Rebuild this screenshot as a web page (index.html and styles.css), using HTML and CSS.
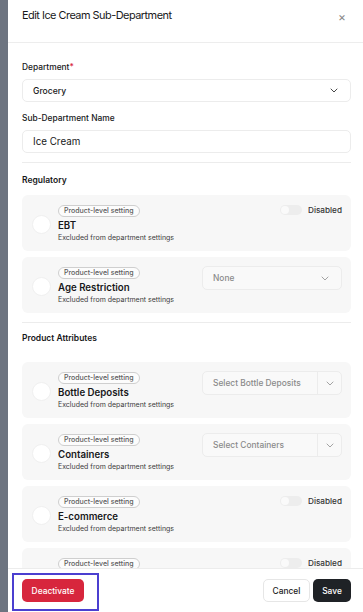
FILE: index.html
```html
<!DOCTYPE html>
<html lang="en">
<head>
  <meta charset="UTF-8">
  <meta name="viewport" content="width=device-width, initial-scale=1.0">
  <title>Edit Ice Cream Sub-Department</title>
  <link rel="stylesheet" href="styles.css">
</head>
<body>
  <div class="backdrop"></div>

  <div class="modal">
    <div class="modal-header">
      <h1>Edit Ice Cream Sub-Department</h1>
      <span class="close">&times;</span>
    </div>

    <div class="modal-body">
      <label class="field-label">Department<span class="req">*</span></label>
      <div class="select">
        <span>Grocery</span>
        <svg width="8" height="5" viewBox="0 0 8 5"><path d="M1 1l3 3 3-3" fill="none" stroke="#333" stroke-width="0.9" stroke-linecap="round" stroke-linejoin="round"/></svg>
      </div>

      <label class="field-label gap">Sub-Department Name</label>
      <div class="input">Ice Cream</div>

      <hr>

      <h2>Regulatory</h2>

      <div class="card">
        <span class="radio"></span>
        <div class="info">
          <span class="badge">Product-level setting</span>
          <div class="name">EBT</div>
          <div class="desc">Excluded from department settings</div>
        </div>
        <div class="toggle-wrap">
          <span class="toggle"><span class="knob"></span></span>
          <span>Disabled</span>
        </div>
      </div>

      <div class="card">
        <span class="radio"></span>
        <div class="info">
          <span class="badge">Product-level setting</span>
          <div class="name">Age Restriction</div>
          <div class="desc">Excluded from department settings</div>
        </div>
        <div class="mini-select">
          <span>None</span>
          <svg width="8" height="5" viewBox="0 0 8 5"><path d="M1 1l3 3 3-3" fill="none" stroke="#999" stroke-width="0.9" stroke-linecap="round" stroke-linejoin="round"/></svg>
        </div>
      </div>

      <hr>

      <h2 class="attr">Product Attributes</h2>

      <div class="card">
        <span class="radio"></span>
        <div class="info">
          <span class="badge">Product-level setting</span>
          <div class="name">Bottle Deposits</div>
          <div class="desc">Excluded from department settings</div>
        </div>
        <div class="mini-select split">
          <span>Select Bottle Deposits</span>
          <span class="arrow"><svg width="8" height="5" viewBox="0 0 8 5"><path d="M1 1l3 3 3-3" fill="none" stroke="#999" stroke-width="0.9" stroke-linecap="round" stroke-linejoin="round"/></svg></span>
        </div>
      </div>

      <div class="card">
        <span class="radio"></span>
        <div class="info">
          <span class="badge">Product-level setting</span>
          <div class="name">Containers</div>
          <div class="desc">Excluded from department settings</div>
        </div>
        <div class="mini-select split">
          <span>Select Containers</span>
          <span class="arrow"><svg width="8" height="5" viewBox="0 0 8 5"><path d="M1 1l3 3 3-3" fill="none" stroke="#999" stroke-width="0.9" stroke-linecap="round" stroke-linejoin="round"/></svg></span>
        </div>
      </div>

      <div class="card">
        <span class="radio"></span>
        <div class="info">
          <span class="badge">Product-level setting</span>
          <div class="name">E-commerce</div>
          <div class="desc">Excluded from department settings</div>
        </div>
        <div class="toggle-wrap">
          <span class="toggle"><span class="knob"></span></span>
          <span>Disabled</span>
        </div>
      </div>

      <div class="card">
        <span class="radio"></span>
        <div class="info">
          <span class="badge">Product-level setting</span>
          <div class="name">Online Ordering</div>
          <div class="desc">Excluded from department settings</div>
        </div>
        <div class="toggle-wrap">
          <span class="toggle"><span class="knob"></span></span>
          <span>Disabled</span>
        </div>
      </div>
    </div>

    <div class="modal-footer">
      <button class="btn btn-danger">Deactivate</button>
      <div class="right">
        <button class="btn btn-light">Cancel</button>
        <button class="btn btn-dark">Save</button>
      </div>
      <!-- destaque da anotação -->
      <div class="highlight"></div>
    </div>
  </div>
</body>
</html>
```

FILE: styles.css
```css
* {
  box-sizing: border-box;
}
body {
  margin: 0;
  display: flex;
  height: 612px;
  overflow: hidden;
  font-family: Inter, "Noto Sans", sans-serif;
  color: #17181a;
  background: #fff;
}
.backdrop {
  width: 8px;
  background-color: #6d7480;
}
.modal {
  flex: 1;
  display: flex;
  flex-direction: column;
  background: #fff;
  height: 612px;
}
.modal-header {
  height: 43px;
  border-bottom: 1px solid #ededed;
  display: flex;
  justify-content: space-between;
  align-items: flex-start;
  padding: 6px 17px 0 14px;
}
.modal-header h1 {
  margin: 0;
  font-size: 10.9px;
  font-weight: 400;
  line-height: 18px;
  letter-spacing: -0.5px;
}
.close {
  font-size: 12px;
  color: #888;
  line-height: 20px;
  margin-top: 1px;
}
.modal-body {
  flex: 1;
  overflow: hidden;
  padding: 18px 12px 0 14px;
}
.field-label {
  display: block;
  font-size: 8.4px;
  font-weight: 500;
  line-height: 12px;
  margin-bottom: 6px;
}
.field-label.gap {
  margin-top: 10px;
}
.req {
  color: #d7263d;
}
.select, .input {
  height: 23px;
  border: 1px solid #ececec;
  border-radius: 5px;
  display: flex;
  align-items: center;
  padding: 0 10px;
  font-size: 8.6px;
  font-weight: 500;
}
.select {
  justify-content: space-between;
  padding-right: 12px;
}
.input {
  font-size: 9.8px;
  font-weight: 400;
}
hr {
  border: none;
  border-top: 1px solid #ececec;
  margin: 9px 0 11px;
}
h2 {
  margin: 0 0 9px;
  font-size: 8.5px;
  font-weight: 600;
  line-height: 12px;
}
h2.attr {
  margin-top: -2px;
  margin-bottom: 18px;
}
.card {
  background: #f7f7f7;
  border-radius: 6px;
  height: 56px;
  display: flex;
  align-items: flex-start;
  padding: 9px 9px 0 10px;
  margin-bottom: 6px;
}
.radio {
  width: 19px;
  height: 19px;
  border-radius: 50%;
  background: #fff;
  border: 1px solid #f0f0f0;
  margin-top: 11px;
  margin-right: 7px;
  flex-shrink: 0;
}
.info {
  flex: 1;
  display: flex;
  flex-direction: column;
  align-items: flex-start;
  padding-top: 1px;
}
.badge {
  font-size: 7px;
  font-weight: 500;
  line-height: 10px;
  color: #5a5a5a;
  border: 1px solid #cfcfcf;
  border-radius: 999px;
  padding: 0 5px;
  background: #fcfcfc;
}
.name {
  font-size: 9.7px;
  font-weight: 600;
  line-height: 13px;
  margin-top: 2px;
}
.desc {
  font-size: 7px;
  color: #3c3c3c;
  line-height: 10px;
  margin-top: 1px;
}
.toggle-wrap {
  display: flex;
  align-items: center;
  gap: 6px;
  font-size: 8.2px;
  font-weight: 500;
  color: #333;
  margin-top: 1px;
}
.toggle {
  width: 22px;
  height: 10px;
  border-radius: 5px;
  background: #ededed;
  position: relative;
}
.knob {
  position: absolute;
  left: 1px;
  top: 1px;
  width: 8px;
  height: 8px;
  border-radius: 50%;
  background: #fafafa;
}
.mini-select {
  width: 140px;
  height: 24px;
  border: 1px solid #ececec;
  border-radius: 5px;
  background: #f9f9f9;
  display: flex;
  align-items: center;
  justify-content: space-between;
  padding: 0 12px 0 10px;
  font-size: 8.4px;
  font-weight: 500;
  color: #8a8a8a;
}
.mini-select.split {
  padding-right: 0;
}
.mini-select .arrow {
  width: 24px;
  height: 100%;
  border-left: 1px solid #ececec;
  display: flex;
  align-items: center;
  justify-content: center;
}
.modal-footer {
  position: relative;
  height: 44px;
  border-top: 1px solid #ececec;
  background: #fff;
  display: flex;
  justify-content: space-between;
  align-items: flex-start;
  padding: 10px 12px 0 14px;
}
.right {
  display: flex;
  gap: 3px;
}
.btn {
  height: 23px;
  border-radius: 5px;
  font-family: Inter, "Noto Sans", sans-serif;
  font-size: 8.4px;
  font-weight: 500;
  padding: 0;
  border: none;
}
.btn-danger {
  background: #d7263d;
  color: #fff;
  width: 62px;
}
.btn-light {
  background: #fff;
  border: 1px solid #e6e6e6;
  color: #222;
  width: 47px;
}
.btn-dark {
  background: #1f2226;
  color: #fff;
  width: 38px;
}
.highlight {
  position: absolute;
  left: 4px;
  top: 4px;
  width: 87px;
  height: 38px;
  border: 2.5px solid #4b3fd0;
}
```
